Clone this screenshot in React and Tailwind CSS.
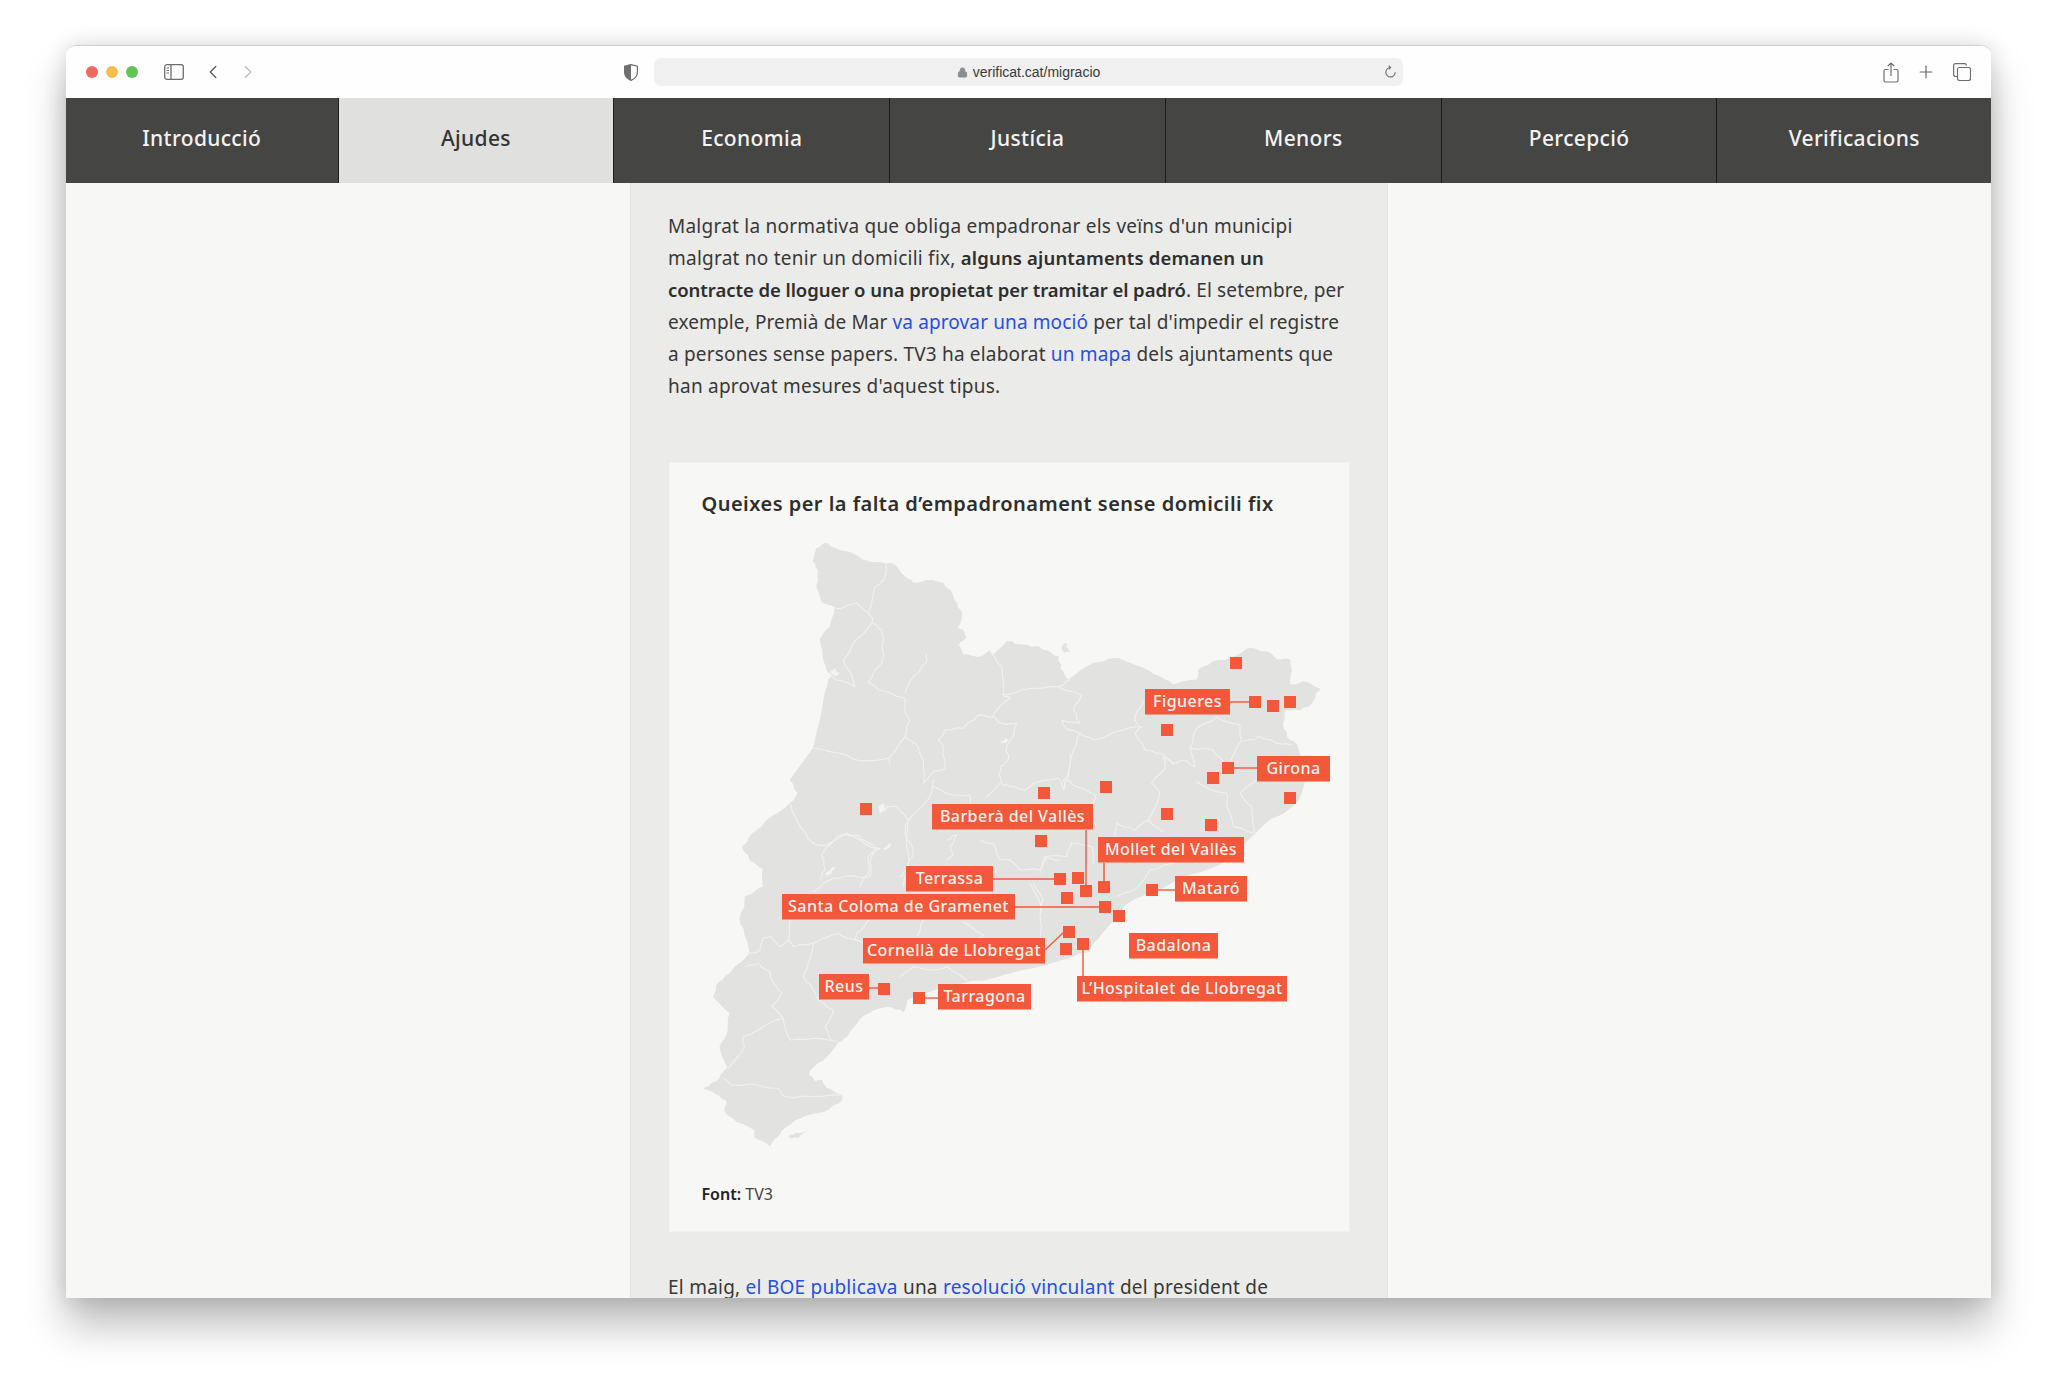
import { ChevronLeft, ChevronRight, Plus, Lock } from 'lucide-react';

const tabs = ['Introducció', 'Ajudes', 'Economia', 'Justícia', 'Menors', 'Percepció', 'Verificacions'];

// crop coordinates -> page coordinates, with a little wobble so the edges are not straight
const trace = (ox, oy, pts, close = false) => {
  const out = [];
  for (let i = 0; i < pts.length; i++) {
    const x = ox + pts[i][0] / 3;
    const y = oy + pts[i][1] / 3;
    out.push([x, y]);
    if (i < pts.length - 1) {
      const nx = ox + pts[i + 1][0] / 3;
      const ny = oy + pts[i + 1][1] / 3;
      const len = Math.hypot(nx - x, ny - y);
      if (len > 7) {
        const dx = (ny - y) / len;
        const dy = -(nx - x) / len;
        const a = Math.sin(x * 1.7 + y * 2.3) * 1.1;
        const b = Math.sin(x * 3.1 - y * 1.3) * 1.1;
        out.push([x + (nx - x) / 3 + dx * a, y + (ny - y) / 3 + dy * a]);
        out.push([x + ((nx - x) * 2) / 3 + dx * b, y + ((ny - y) * 2) / 3 + dy * b]);
      }
    }
  }
  return 'M' + out.map(([x, y]) => `${x.toFixed(1)} ${y.toFixed(1)}`).join('L') + (close ? 'Z' : '');
};

const outline =
  trace(780, 520, [[110,85],[135,70],[165,85],[215,100],[265,125],[318,133],[345,135],[375,170],[400,190],[440,182],[490,190],[510,210],[530,250],[545,285],[530,325],[548,330],[558,350],[535,375],[548,405],[590,412],[612,405],[628,392],[640,405],[680,365],[720,375],[775,380],[815,400],[835,410],[840,445],[865,480]]) +
  trace(1000, 630, [[200,155],[280,100],[355,85],[430,115],[480,140],[520,165],[590,150],[595,120],[640,95],[690,85],[745,55],[800,65],[830,90],[870,90],[875,120],[870,165],[910,155],[960,178],[945,195],[935,220],[900,240],[855,240],[848,280],[860,320],[890,345],[910,400],[915,440],[895,510],[850,550],[800,575],[760,615],[700,680],[600,725],[520,755],[420,800],[375,825]]).replace('M', 'L') +
  trace(960, 820, [[460,300],[410,360],[385,395],[300,420],[180,450],[110,470],[0,490]]).replace('M', 'L') +
  trace(700, 780, [[800,605],[700,630],[620,660],[610,695],[575,680],[520,690],[480,715],[440,770],[415,785],[370,840],[330,870],[325,885],[345,905],[365,900],[380,925],[425,945],[425,960],[390,985],[340,1000],[285,1020],[245,1050],[210,1097],[168,1075],[165,1050],[110,1025],[75,995],[80,960],[45,940],[12,925],[50,905],[62,885],[85,865],[60,800],[85,750],[90,700],[40,650],[50,615],[75,590],[105,560],[150,520],[135,465],[120,415],[135,380],[135,350],[190,320],[190,265],[150,240],[128,200],[165,155],[215,110],[270,70],[295,40],[270,0]]).replace('M', 'L') +
  trace(780, 520, [[100,685],[120,605],[145,490],[155,470],[140,445],[120,360],[150,320],[165,260],[125,245],[110,200],[115,150],[100,125]]).replace('M', 'L') +
  'Z';

const borders = [
  trace(780, 520, [[318,133],[312,180],[285,200],[265,280],[278,295],[275,310],[245,345],[215,380],[190,420],[215,465],[225,500],[170,480],[150,460]]),
  trace(780, 520, [[265,280],[230,250],[185,265],[160,262]]),
  trace(780, 520, [[278,310],[305,330],[312,410],[295,440],[265,485],[295,510],[375,535],[375,570],[390,600],[375,650],[330,710],[330,735]]),
  trace(780, 520, [[330,715],[240,722],[180,700],[100,685]]),
  trace(780, 520, [[375,650],[415,680],[430,720],[430,790],[460,755],[495,745],[490,680],[475,660],[495,630],[550,625],[595,585],[640,590],[665,610],[710,610],[700,650],[680,680],[685,720],[660,740],[660,770],[665,790],[690,800],[735,810],[775,785],[835,775],[850,810],[860,780],[890,800],[945,825],[940,860]]),
  trace(780, 520, [[440,400],[440,425],[400,470],[375,520]]),
  trace(780, 520, [[630,395],[665,440],[670,525],[690,535],[650,570],[640,590]]),
  trace(780, 520, [[670,525],[760,505],[835,500],[905,525],[880,570],[900,610],[845,600],[865,630],[900,640],[880,690],[860,770]]),
  trace(780, 520, [[835,500],[870,480]]),
  trace(780, 520, [[900,640],[940,660],[1030,630],[1085,620],[1065,640],[1095,690],[1145,700],[1180,735]]),
  trace(780, 520, [[460,780],[450,830],[385,900],[380,950],[385,1040],[370,1100]]),
  trace(780, 520, [[460,800],[520,825],[570,825],[570,850]]),
  trace(780, 520, [[620,830],[660,790]]),
  trace(780, 520, [[30,850],[60,920],[100,970],[140,975],[200,940],[260,975],[300,985],[265,1010],[265,1060],[240,1100]]),
  trace(780, 520, [[385,900],[350,860],[320,860],[300,880]]),
  trace(700, 780, [[415,165],[470,165],[490,180],[530,205],[510,240],[510,290],[430,290],[390,300],[340,335]]),
  trace(700, 780, [[415,165],[365,225],[375,270],[360,300]]),
  trace(700, 780, [[620,130],[615,160],[640,210],[620,270],[600,290]]),
  trace(700, 780, [[270,420],[265,480],[280,500],[340,490],[415,460],[430,470],[490,490]]),
  trace(700, 780, [[150,520],[180,510],[190,475],[215,470],[240,500],[265,480]]),
  trace(700, 780, [[340,490],[325,550],[310,590],[340,630],[355,660],[400,690],[375,740],[395,780]]),
  trace(700, 780, [[135,560],[175,550],[210,575],[215,600],[245,640],[215,680],[250,715],[270,780],[340,775],[415,785]]),
  trace(700, 780, [[250,715],[190,740],[130,770],[130,810],[85,865]]),
  trace(700, 780, [[70,895],[100,915],[170,915],[235,925],[255,950],[340,950],[430,945]]),
  trace(700, 780, [[600,590],[640,560],[700,570],[740,560],[800,600]]),
  trace(700, 780, [[790,425],[850,465],[830,480]]),
  trace(700, 780, [[840,180],[880,190],[900,240],[930,240],[960,270],[1020,270],[1040,235],[1080,240]]),
  trace(700, 780, [[740,180],[770,165],[750,200],[760,225],[740,240]]),
  trace(700, 780, [[1000,310],[1030,360],[1020,400]]),
  trace(700, 780, [[520,410],[470,460],[465,480]]),
  trace(700, 780, [[670,420],[650,470]]),
  trace(1000, 630, [[415,290],[405,260],[430,210]]),
  trace(1000, 630, [[490,385],[495,415],[455,460],[480,490],[445,570],[405,600],[350,580],[345,620]]),
  trace(1000, 630, [[490,380],[520,400],[550,390],[585,410],[570,355],[590,295],[650,262],[720,285],[725,330],[690,395]]),
  trace(1000, 630, [[570,355],[640,360],[670,395]]),
  trace(1000, 630, [[590,455],[650,485],[680,490],[680,530],[700,590],[760,610]]),
  trace(1000, 630, [[725,335],[760,330],[780,320],[830,340],[875,345]]),
  trace(1000, 630, [[770,450],[720,490],[755,530],[765,610]]),
  trace(1000, 630, [[445,570],[490,605]]),
  trace(1000, 630, [[210,370],[205,440],[190,450],[190,480]]),
  trace(1000, 630, [[350,800],[405,780],[450,720],[520,700]]),
  trace(1000, 630, [[210,640],[275,650],[280,700]]),
  trace(1000, 630, [[120,730],[135,680],[200,680],[215,640]]),
  trace(1000, 630, [[90,760],[125,830],[120,920],[130,960]]),
];

const islands = [
  trace(780, 520, [[850,372],[862,368],[858,382],[872,398],[848,394],[844,384]], true),
  trace(700, 780, [[265,1070],[285,1058],[325,1052],[300,1068],[275,1076]], true),
];

const lakes = [
  trace(780, 520, [[150,455],[165,445],[180,460],[165,470]], true),
  trace(780, 520, [[295,860],[310,850],[318,870],[300,880]], true),
  trace(780, 520, [[310,985],[335,970],[330,982],[315,990]], true),
  trace(780, 520, [[135,1060],[165,1040],[155,1060],[140,1068]], true),
  trace(780, 520, [[660,662],[685,658],[680,668],[665,668]], true),
];

const squares = [
  [1236,663],[1255,702],[1273,706],[1290,702],[1167,730],[1228,768],[1213,778],[1290,798],
  [1106,787],[1044,793],[1167,814],[1211,825],[1041,841],[1060,879],[1078,878],[1086,891],
  [1104,887],[1067,898],[1105,907],[1119,916],[1152,890],[1069,932],[1066,949],[1083,944],
  [866,809],[884,989],[919,998],
];

const leaders = [
  [1230,702,1250,702],[1233,768,1257,768],[1104,863,1104,882],[1086,830,1086,886],[993,879,1055,879],
  [1015,907,1100,907],[1157,890,1175,890],[1045,950,1064,932],[1083,950,1083,976],[869,988,880,988],[925,998,938,998],
];

const labels = [
  ['Figueres', 1145, 689, 85],
  ['Girona', 1257, 756, 73],
  ['Barberà del Vallès', 932, 804, 161],
  ['Mollet del Vallès', 1098, 837, 146],
  ['Terrassa', 906, 866, 87],
  ['Mataró', 1175, 876, 72],
  ['Santa Coloma de Gramenet', 782, 894, 233],
  ['Badalona', 1129, 933, 89],
  ['Cornellà de Llobregat', 863, 938, 182],
  ['Reus', 819, 974, 50],
  ['L’Hospitalet de Llobregat', 1077, 976, 210],
  ['Tarragona', 938, 984, 93],
];

function CataloniaMap() {
  return (
    <svg viewBox="671 530 677 630" className="block w-[677px] h-[630px] ml-[0.5px] mt-[12px]">
      <path d={outline} fill="#e2e2e0" stroke="#e2e2e0" strokeWidth="1" strokeLinejoin="round" />
      {islands.map((d, i) => <path key={i} d={d} fill="#e2e2e0" />)}
      {lakes.map((d, i) => <path key={i} d={d} fill="#f3f3f1" />)}
      {borders.map((d, i) => (
        <path key={i} d={d} fill="none" stroke="#f1f1ef" strokeWidth="1.1" strokeLinejoin="round" />
      ))}
      {leaders.map(([x1, y1, x2, y2], i) => (
        <line key={i} x1={x1} y1={y1} x2={x2} y2={y2} stroke="#f4583a" strokeWidth="1.4" />
      ))}
      {squares.map(([x, y], i) => (
        <rect key={i} x={x - 6} y={y - 6} width="12" height="12" fill="#f4583a" />
      ))}
      {labels.map(([name, x, y, w]) => (
        <g key={name}>
          <rect x={x} y={y} width={w} height="25.5" fill="#f4583a" />
          <text x={x + w / 2} y={y + 18} textAnchor="middle" fill="#fdf3ef" className="text-[16px] font-medium tracking-[0.45px]">
            {name}
          </text>
        </g>
      ))}
    </svg>
  );
}

function Toolbar() {
  return (
    <div className="flex items-center h-[52px] shrink-0 bg-[#fefefe] relative">
      <span className="ml-[20px] w-[12px] h-[12px] rounded-full bg-[#ed6a5e]" />
      <span className="ml-[8px] w-[12px] h-[12px] rounded-full bg-[#f4bf4f]" />
      <span className="ml-[8px] w-[12px] h-[12px] rounded-full bg-[#61c554]" />
      <svg width="20" height="16" viewBox="0 0 20 16" className="ml-[26px]" fill="none" stroke="#6e6e6e" strokeWidth="1.3">
        <rect x="0.7" y="0.7" width="18.6" height="14.6" rx="2.2" />
        <path d="M7 .7v14.6" />
        <path d="M2.500 4h2.500M2.500 6.500h2.500M2.500 9h2.500" strokeWidth="1" />
      </svg>
      <ChevronLeft size={22} strokeWidth={1.5} className="ml-[18px] text-[#5f5f5f]" />
      <ChevronRight size={22} strokeWidth={1.5} className="ml-[13px] text-[#bdbdbd]" />
      <svg width="14" height="17" viewBox="0 0 14 17" className="ml-[365px]">
        <path d="M7 .6 13.400 2.200v6c0 4-2.800 6.600-6.400 8.200C3.400 14.800.6 12.200.6 8.200v-6Z" fill="#fff" stroke="#6f6f6f" strokeWidth="1.2" />
        <path d="M7 .6 .6 2.200v6c0 4 2.800 6.600 6.400 8.200Z" fill="#6f6f6f" />
      </svg>
      <div className="ml-[16px] w-[749px] h-[28px] rounded-[7px] bg-[#f0f0f0] flex items-center justify-center relative">
        <Lock size={11} className="text-[#8e8e8e] mr-[5px]" fill="#8e8e8e" />
        <span className="text-[14px] text-[#3a3a3a] font-['Liberation_Sans',sans-serif]">verificat.cat/migracio</span>
        <svg width="13" height="14" viewBox="0 0 13 14" className="absolute right-[6px]" fill="none" stroke="#6e6e6e" strokeWidth="1.1">
          <path d="M6.500 2.500a4.700 4.700 0 1 0 4.700 4.700" />
          <path d="M4.700.6 6.700 2.500 4.700 4.400" />
        </svg>
      </div>
      <svg width="16" height="21" viewBox="0 0 16 21" className="ml-[480px]" fill="none" stroke="#6e6e6e" strokeWidth="1.2">
        <path d="M5.500 7.500H2.500a1.500 1.500 0 0 0-1.500 1.500v9.500A1.500 1.500 0 0 0 2.500 20h11a1.500 1.500 0 0 0 1.500-1.500V9a1.500 1.500 0 0 0-1.500-1.500h-3" />
        <path d="M8 14V1M4.800 4 8 1l3.200 3" />
      </svg>
      <Plus size={20} strokeWidth={1.4} className="ml-[17px] text-[#666666]" />
      <svg width="18" height="18" viewBox="0 0 18 18" className="ml-[17px]" fill="none" stroke="#6e6e6e" strokeWidth="1.2">
        <rect x="4.500" y="4.500" width="13" height="13" rx="2" />
        <path d="M13.500 2.500A2 2 0 0 0 11.500.6H2.600a2 2 0 0 0-2 2v8.900a2 2 0 0 0 2 2h2" />
      </svg>
    </div>
  );
}

export default function App() {
  const bold = "font-semibold text-[18.5px] text-[#2e2e2c]";
  return (
    <div className="h-[1384px] bg-white pt-[45px] pl-[66px] font-['Noto_Sans',sans-serif] overflow-hidden">
      <div className="w-[1925px] h-[1253px] flex flex-col overflow-hidden rounded-t-[10px] border-t border-[#cfcfcf] shadow-[0_28px_42px_rgba(0,0,0,0.26),0_0_22px_rgba(0,0,0,0.14)]">
        <Toolbar />
        <nav className="flex h-[85px] shrink-0 bg-[#454543]">
          {tabs.map((t, i) => (
            <div
              key={t}
              className={`flex items-center justify-center pb-[4px] text-[21px] tracking-[0.33px] font-medium border-r border-[#1c1c1b] last:border-r-0 ${i === 0 ? 'w-[272.500px]' : i === 6 ? 'w-[273.500px]' : 'flex-1'} ${i === 1 ? 'bg-[#e0e0de] text-[#333331]' : 'text-[#f3f3f1]'}`}
            >
              {t}
            </div>
          ))}
        </nav>
        <main className="flex-1 min-h-0 bg-[#f7f7f5] overflow-hidden">
          <article className="ml-[564px] w-[758px] h-full bg-[#ebebe9] border-x border-[#e3e3e1] pl-[37px] overflow-hidden">
            <div className="pt-[27px] text-[19px] leading-[32px] text-[#383836] whitespace-nowrap">
              <p className="tracking-[0.24px]">Malgrat la normativa que obliga empadronar els veïns d'un municipi</p>
              <p className="tracking-[0.24px]">malgrat no tenir un domicili fix, <b className={`${bold} tracking-[0.15px]`}>alguns ajuntaments demanen un</b></p>
              <p className="tracking-[0.15px]"><b className={`${bold} tracking-[-0.05px]`}>contracte de lloguer o una propietat per tramitar el padró</b>. El setembre, per</p>
              <p className="tracking-[0.12px]">exemple, Premià de Mar <a className="text-[#2350e6]">va aprovar una moció</a> per tal d'impedir el registre</p>
              <p className="tracking-[0.18px]">a persones sense papers. TV3 ha elaborat <a className="text-[#2350e6]">un mapa</a> dels ajuntaments que</p>
              <p className="tracking-[0.24px]">han aprovat mesures d'aquest tipus.</p>
            </div>
            <figure className="mt-[60px] ml-[1px] w-[681px] h-[770px] bg-[#f7f7f5] border border-[#f1f1ef]">
              <h3 className="pt-[27px] pl-[31.5px] text-[20px] tracking-[0.47px] leading-[28px] font-semibold text-[#2e2e2c]">
                Queixes per la falta d’empadronament sense domicili fix
              </h3>
              <CataloniaMap />
              <figcaption className="mt-[22px] pl-[31.5px] text-[16px] leading-[24px] text-[#444442]">
                <b className="font-semibold text-[#222]">Font:</b> TV3
              </figcaption>
            </figure>
            <p className="mt-[39px] text-[19px] tracking-[0.24px] leading-[32px] text-[#383836] whitespace-nowrap">
              El maig, <a className="text-[#2350e6]">el BOE publicava</a> una <a className="text-[#2350e6]">resolució vinculant</a> del president de
            </p>
          </article>
        </main>
      </div>
    </div>
  );
}
